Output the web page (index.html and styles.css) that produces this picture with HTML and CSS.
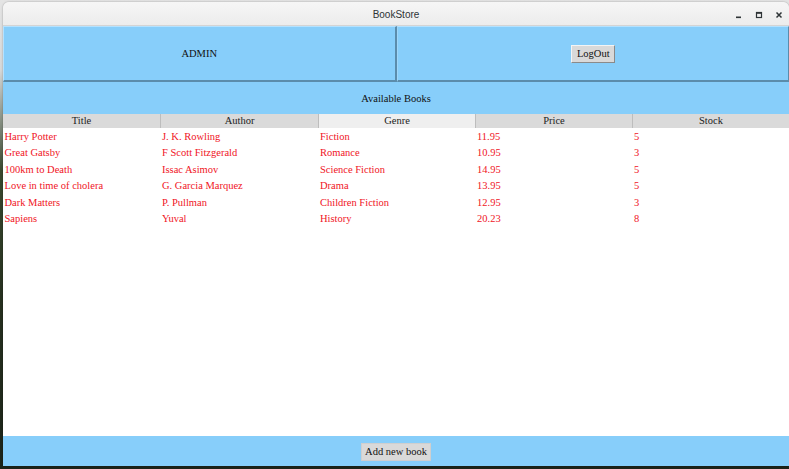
FILE: index.html
```html
<!DOCTYPE html>
<html>
<head>
<meta charset="utf-8">
<title>BookStore</title>
<link rel="stylesheet" href="styles.css">
</head>
<body>
<div class="window">
  <div class="titlebar">
    <span class="title">BookStore</span>
    <div class="controls">
      <svg class="ctl" width="12" height="12" viewBox="0 0 12 12"><rect x="3" y="7.5" width="5" height="1.6" fill="#2e3436"/></svg>
      <svg class="ctl" width="12" height="12" viewBox="0 0 12 12"><rect x="3.5" y="3.5" width="5" height="5" fill="none" stroke="#2e3436" stroke-width="1.2"/><rect x="3" y="3" width="6" height="1.8" fill="#2e3436"/></svg>
      <svg class="ctl" width="12" height="12" viewBox="0 0 12 12"><path d="M3.5 3.5 L8.5 8.5 M8.5 3.5 L3.5 8.5" stroke="#2e3436" stroke-width="1.5"/></svg>
    </div>
  </div>
  <div class="content">
    <div class="top">
      <div class="panel panel-left"><span class="label">ADMIN</span></div>
      <div class="panel panel-right"><button class="btn btn-raised">LogOut</button></div>
    </div>
    <div class="banner">Available Books</div>
    <div class="table">
      <div class="thead">
        <div class="th">Title</div>
        <div class="th">Author</div>
        <div class="th th-active">Genre</div>
        <div class="th">Price</div>
        <div class="th">Stock</div>
      </div>
      <div class="tbody">
        <div class="tr"><span>Harry Potter</span><span>J. K. Rowling</span><span>Fiction</span><span>11.95</span><span>5</span></div>
        <div class="tr"><span>Great Gatsby</span><span>F Scott Fitzgerald</span><span>Romance</span><span>10.95</span><span>3</span></div>
        <div class="tr"><span>100km to Death</span><span>Issac Asimov</span><span>Science Fiction</span><span>14.95</span><span>5</span></div>
        <div class="tr"><span>Love in time of cholera</span><span>G. Garcia Marquez</span><span>Drama</span><span>13.95</span><span>5</span></div>
        <div class="tr"><span>Dark Matters</span><span>P. Pullman</span><span>Children Fiction</span><span>12.95</span><span>3</span></div>
        <div class="tr"><span>Sapiens</span><span>Yuval</span><span>History</span><span>20.23</span><span>8</span></div>
      </div>
    </div>
    <div class="footer"><button class="btn btn-flat">Add new book</button></div>
  </div>
</div>
</body>
</html>
```
FILE: styles.css
```css
html, body {
  margin: 0;
  padding: 0;
}
body {
  width: 789px;
  height: 469px;
  overflow: hidden;
  background: linear-gradient(to bottom, #e4e4e4 0px, #d6d8d8 70px, #3a4a30 170px, #26301f 300px, #1c2419 469px);
  font-family: "Liberation Serif", "Times New Roman", serif;
}
.window {
  margin: 2px 0 0 3px;
  width: 786px;
  height: 464px;
  display: flex;
  flex-direction: column;
  background: #f2f2f2;
  border-radius: 6px 6px 0 0;
  box-shadow: 0 0 2px rgba(0,0,0,0.35);
}
.titlebar {
  height: 24px;
  flex: none;
  display: flex;
  align-items: center;
  justify-content: center;
  position: relative;
  background: linear-gradient(to bottom, #f6f6f6, #ececec);
  border-radius: 6px 6px 0 0;
  border-bottom: 1px solid #d4d4d4;
  box-sizing: border-box;
}
.title {
  font-family: "Liberation Sans", Arial, sans-serif;
  font-size: 10px;
  color: #2e3436;
  margin-top: 1px;
}
.controls {
  position: absolute;
  right: 4px;
  top: 7px;
  display: flex;
  gap: 8px;
}
.ctl {
  display: block;
}
.content {
  flex: 1;
  display: flex;
  flex-direction: column;
  background: #ffffff;
}
.top {
  height: 56px;
  flex: none;
  display: flex;
}
.panel {
  flex: 1;
  background: #87cefa;
  display: flex;
  align-items: center;
  justify-content: center;
  box-sizing: border-box;
  border-top: 1px solid #b4e2ff;
  border-bottom: 2px solid #5b8cab;
}
.panel-left {
  border-left: 1px solid #b4e2ff;
  border-right: 2px solid #5b8cab;
}
.panel-right {
  border-left: 1px solid #9fd6f8;
  border-right: 1px solid #5b8cab;
}
.label {
  font-size: 10.5px;
  color: #111;
}
.btn {
  font-family: "Liberation Serif", "Times New Roman", serif;
  font-size: 10.5px;
  color: #111;
  background: #d9d9d9;
  margin: 0;
  box-sizing: border-box;
  height: 18px;
  line-height: 14px;
  cursor: default;
}
.btn-raised {
  width: 44px;
  padding: 0;
  border: 1px solid;
  border-color: #f4f4f4 #8a8a8a #8a8a8a #f4f4f4;
  margin-left: 1px;
}
.btn-flat {
  width: 70px;
  padding: 0;
  border: 1px solid #cfcfcf;
  margin-top: 2px;
}
.banner {
  height: 32px;
  flex: none;
  background: #87cefa;
  display: flex;
  align-items: center;
  justify-content: center;
  font-size: 10.5px;
  color: #111;
}
.table {
  flex: 1;
  display: flex;
  flex-direction: column;
  background: #ffffff;
}
.thead {
  height: 14px;
  display: grid;
  grid-template-columns: 157px 158px 157px 157px 1fr;
  background: #d9d9d9;
}
.th {
  font-size: 10.5px;
  line-height: 14px;
  text-align: center;
  color: #222;
  border-left: 1px solid #bdbdbd;
  background: #dadada;
}
.th:first-child {
  border-left: none;
}
.th-active {
  background: #efefef;
}
.tbody {
  flex: 1;
  padding-top: 1px;
}
.tr {
  display: grid;
  grid-template-columns: 157px 158px 157px 157px 1fr;
  height: 16.4px;
  line-height: 16.4px;
  font-size: 10.5px;
  color: #f0141e;
}
.tr span {
  padding-left: 2px;
  white-space: nowrap;
}
.tr span:first-child {
  padding-left: 1.5px;
}
.footer {
  height: 30px;
  flex: none;
  background: #87cefa;
  display: flex;
  align-items: center;
  justify-content: center;
}
```
